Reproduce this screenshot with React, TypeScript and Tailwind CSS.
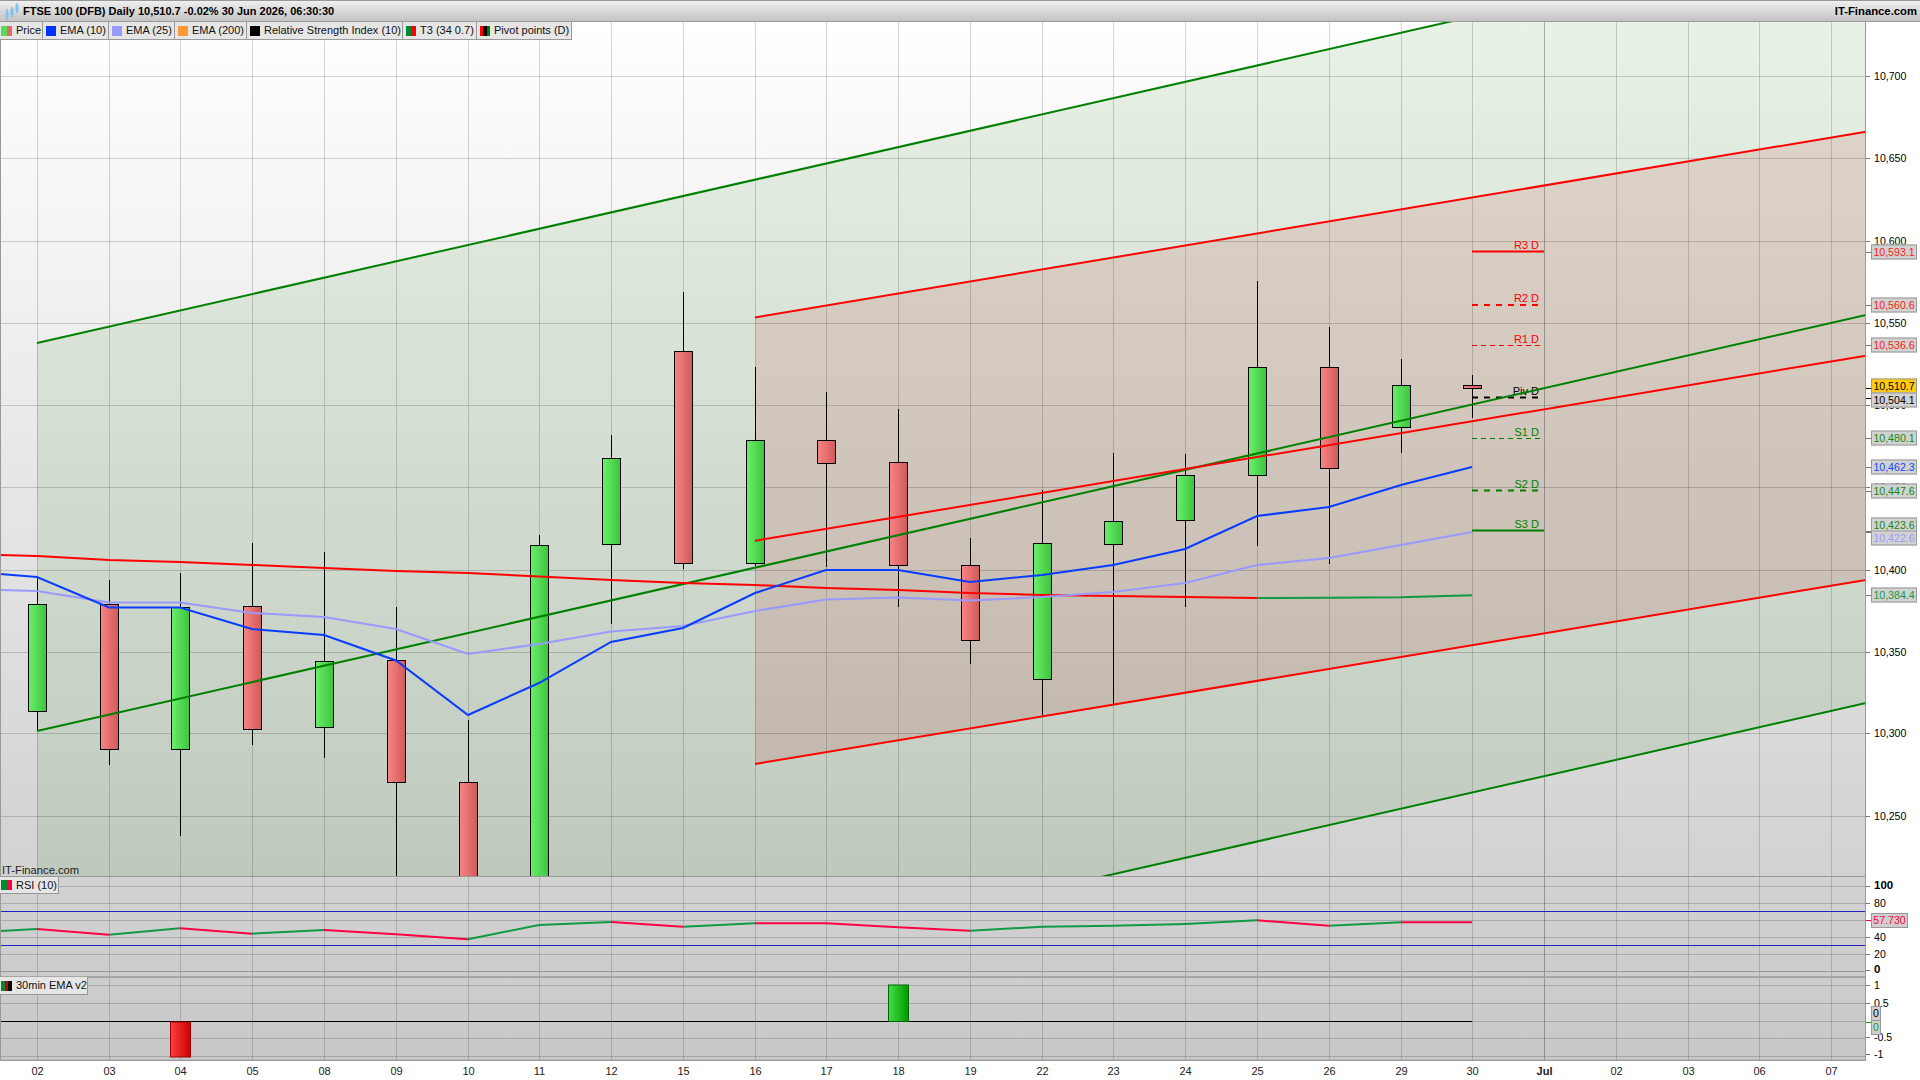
import React from "react"

const XS = [37, 109, 180, 252, 324, 396, 468, 539, 611, 683, 755, 826, 898, 970, 1042, 1113, 1185, 1257, 1329, 1401, 1472, 1544, 1616, 1688, 1759, 1831]
const DAYS = ["02", "03", "04", "05", "08", "09", "10", "11", "12", "15", "16", "17", "18", "19", "22", "23", "24", "25", "26", "29", "30", "Jul", "02", "03", "06", "07"]

// up, open edge, close edge, wick top, wick bottom
const CANDLES: [boolean, number, number, number, number][] = [
  [true, 604, 711, 577, 731],
  [false, 604, 749, 580, 765],
  [true, 607, 749, 573, 836],
  [false, 606, 729, 543, 745],
  [true, 661, 727, 552, 758],
  [false, 660, 782, 607, 876],
  [false, 782, 880, 720, 876],
  [true, 545, 880, 535, 876],
  [true, 458, 544, 435, 624],
  [false, 351, 563, 292, 569],
  [true, 440, 563, 367, 566],
  [false, 440, 463, 392, 567],
  [false, 462, 565, 409, 607],
  [false, 565, 640, 538, 664],
  [true, 543, 679, 490, 717],
  [true, 521, 544, 453, 704],
  [true, 475, 520, 454, 607],
  [true, 367, 475, 281, 546],
  [false, 367, 468, 327, 564],
  [true, 385, 427, 359, 453],
  [false, 385, 388, 375, 418],
]

const EMA10 = [574, 577, 607.5, 607.5, 629, 635, 660.5, 715, 683, 642, 628, 593, 570, 570, 582, 575, 565, 549, 516, 507, 485, 467]
const EMA25 = [590, 591, 602.5, 602.5, 613, 617, 629, 654, 644, 631.5, 626, 611, 599.5, 597.5, 600.5, 597, 592, 583, 565, 558, 545, 532]
const EMA200 = [555, 556, 560, 562, 565, 568, 571, 573, 576.5, 580, 583, 585, 588, 590, 593, 595, 596, 597, 598, 597.7, 597.3, 595.3]
const RSI = [931, 929, 934.7, 928.3, 933.7, 930, 934.3, 939.3, 925, 922, 926.7, 923.3, 923.3, 927.3, 930.7, 926.7, 925.7, 924, 920.3, 925.7, 922.3, 922.3]

const PRICE_GRID = [76.5, 158.5, 241.5, 323.5, 405.5, 487.5, 570.5, 652.5, 733.5, 816.5]
const PANEL_GRID = [886.5, 903.5, 920.5, 937.5, 954.5, 971.5, 985.5, 1003.5, 1021.5, 1038.5, 1056.5]

const PIVOTS = [
  { label: "R3 D", y: 251.5, color: "#ff0000", width: 2, dash: undefined, end: 1544 },
  { label: "R2 D", y: 305, color: "#ff0000", width: 2, dash: "6 6", end: 1544 },
  { label: "R1 D", y: 345.5, color: "#ff0000", width: 1, dash: "5 4", end: 1541 },
  { label: "Piv D", y: 397.5, color: "#000000", width: 2, dash: "6 6", end: 1544 },
  { label: "S1 D", y: 438.5, color: "#008000", width: 1, dash: "5 4", end: 1541 },
  { label: "S2 D", y: 490.5, color: "#008000", width: 2, dash: "6 6", end: 1544 },
  { label: "S3 D", y: 530.5, color: "#008000", width: 2, dash: undefined, end: 1544 },
]

const AXIS_TEXT = [
  { t: "10,700", y: 76 }, { t: "10,650", y: 158 }, { t: "10,600", y: 241 }, { t: "10,550", y: 323 },
  { t: "10,500", y: 405 }, { t: "10,450", y: 487 }, { t: "10,400", y: 570 }, { t: "10,350", y: 652 },
  { t: "10,300", y: 733 }, { t: "10,250", y: 816 },
  { t: "100", y: 886, bold: true }, { t: "80", y: 903 }, { t: "40", y: 937 }, { t: "20", y: 954 }, { t: "0", y: 970, bold: true },
  { t: "1", y: 985 }, { t: "0.5", y: 1003 }, { t: "-0.5", y: 1037 }, { t: "-1", y: 1054 },
]

const AXIS_BOXES = [
  { t: "10,593.1", y: 252, tick: 252, color: "text-[#ff2020]", bg: "bg-[#d2d2d2]" },
  { t: "10,560.6", y: 305, tick: 305, color: "text-[#ff2020]", bg: "bg-[#d2d2d2]" },
  { t: "10,536.6", y: 345, tick: 345, color: "text-[#ff2020]", bg: "bg-[#d2d2d2]" },
  { t: "10,510.7", y: 386, tick: 388, color: "text-black", bg: "bg-[#ffcc11]" },
  { t: "10,504.1", y: 400, tick: 398, color: "text-black", bg: "bg-[#d2d2d2]" },
  { t: "10,480.1", y: 438, tick: 438, color: "text-[#118811]", bg: "bg-[#d2d2d2]" },
  { t: "10,462.3", y: 467, tick: 467, color: "text-[#1144ff]", bg: "bg-[#d2d2d2]" },
  { t: "10,447.6", y: 491, tick: 491, color: "text-[#118811]", bg: "bg-[#d2d2d2]" },
  { t: "10,423.6", y: 525, tick: 531, color: "text-[#118811]", bg: "bg-[#d2d2d2]" },
  { t: "10,422.6", y: 538, tick: 532, color: "text-[#9999ff]", bg: "bg-[#d2d2d2]" },
  { t: "10,384.4", y: 595, tick: 595, color: "text-[#119944]", bg: "bg-[#d2d2d2]" },
]

const LEGEND = [
  { name: "Price", w: "w-[43px]", pad: "pl-px", icon: "w-[11px]", colors: ["bg-[#55dd55]", "bg-[#e86868]"] },
  { name: "EMA (10)", w: "w-[66px]", pad: "pl-[3px]", icon: "w-[10px]", colors: ["bg-[#0033ff]"] },
  { name: "EMA (25)", w: "w-[66px]", pad: "pl-[3px]", icon: "w-[10px]", colors: ["bg-[#9999ff]"] },
  { name: "EMA (200)", w: "w-[72px]", pad: "pl-[3px]", icon: "w-[10px]", colors: ["bg-[#ff9933]"] },
  { name: "Relative Strength Index (10)", w: "w-[156px]", pad: "pl-[3px]", icon: "w-[10px]", colors: ["bg-black"] },
  { name: "T3 (34 0.7)", w: "w-[74px]", pad: "pl-[3px]", icon: "w-[10px]", colors: ["bg-[#008833]", "bg-[#ff0000]"] },
  { name: "Pivot points (D)", w: "w-[95px]", pad: "pl-[3px]", icon: "w-[10px]", colors: ["bg-[#ff0000]", "bg-black", "bg-[#008000]"] },
]

function points(ys: number[]) {
  return ys.map((y, i) => (i === 0 ? "0" : XS[i - 1]) + "," + y).join(" ")
}

function LegendIcon({ colors, width }: { colors: string[]; width: string }) {
  return (
    <span className={`flex ${width} h-[10px] shrink-0`}>
      {colors.map((c, i) => (
        <span key={i} className={`${c} flex-1`} />
      ))}
    </span>
  )
}

function Chart() {
  return (
    <svg viewBox="0 22 1866 1039" className="block w-[1866px] h-[1039px]">
      <defs>
        <linearGradient id="bg" x1="0" y1="0" x2="0" y2="1">
          <stop offset="0" stopColor="#ffffff" />
          <stop offset="1" stopColor="#c8c8c8" />
        </linearGradient>
        <linearGradient id="up" x1="0" y1="0" x2="1" y2="0">
          <stop offset="0" stopColor="#6cee6c" />
          <stop offset="1" stopColor="#3cc43c" />
        </linearGradient>
        <linearGradient id="down" x1="0" y1="0" x2="1" y2="0">
          <stop offset="0" stopColor="#f98484" />
          <stop offset="1" stopColor="#d05a5a" />
        </linearGradient>
        <linearGradient id="barRed" x1="0" y1="0" x2="1" y2="0">
          <stop offset="0" stopColor="#ff4040" />
          <stop offset="1" stopColor="#cc0000" />
        </linearGradient>
        <linearGradient id="barGreen" x1="0" y1="0" x2="1" y2="0">
          <stop offset="0" stopColor="#44dd44" />
          <stop offset="1" stopColor="#009900" />
        </linearGradient>
        <clipPath id="main">
          <rect x="0" y="22" width="1866" height="854" />
        </clipPath>
      </defs>

      <rect x="0" y="22" width="1866" height="1039" fill="url(#bg)" />

      <g clipPath="url(#main)">
        <polygon points="37,343 1866,-73 1866,703 37,1119" fill="rgb(40,128,20)" fillOpacity="0.107" />
        <polygon points="755,317.4 1866,131.7 1866,580 755,764" fill="rgb(180,0,0)" fillOpacity="0.107" />
      </g>

      {XS.map((x, i) => (
        <line key={i} x1={x + 0.5} x2={x + 0.5} y1="22" y2="1061" stroke="#000" strokeOpacity={DAYS[i] === "Jul" ? 0.28 : 0.16} />
      ))}
      {PRICE_GRID.concat(PANEL_GRID).map((y, i) => (
        <line key={i} x1="0" x2="1866" y1={y} y2={y} stroke="#000" strokeOpacity="0.17" />
      ))}

      <g clipPath="url(#main)">
        {CANDLES.map(([up, top, bottom, wickTop, wickBottom], i) => (
          <g key={i}>
            <line x1={XS[i] + 0.5} x2={XS[i] + 0.5} y1={wickTop} y2={wickBottom} stroke="#000" strokeWidth="1" />
            <rect x={XS[i] - 8.5} y={top + 0.5} width="18" height={bottom - top} fill={up ? "url(#up)" : "url(#down)"} stroke="#000" strokeWidth="1" />
          </g>
        ))}

        {PIVOTS.map((p) => (
          <g key={p.label}>
            <line x1="1472" x2={p.end} y1={p.y} y2={p.y} stroke={p.color} strokeWidth={p.width} strokeDasharray={p.dash} />
            <text x="1539" y={p.y - 3} textAnchor="end" fontSize="11" fill={p.color}>{p.label}</text>
          </g>
        ))}

        <g fill="none" stroke="#008000" strokeWidth="2">
          <line x1="37" y1="343" x2="1866" y2="-73" />
          <line x1="37" y1="731" x2="1866" y2="315" />
          <line x1="37" y1="1119" x2="1866" y2="703" />
        </g>
        <g fill="none" stroke="#ff0000" strokeWidth="2">
          <line x1="755" y1="317.4" x2="1866" y2="131.7" />
          <line x1="755" y1="540.7" x2="1866" y2="355.7" />
          <line x1="755" y1="764" x2="1866" y2="580" />
        </g>

        <polyline points={points(EMA200.slice(0, 19))} fill="none" stroke="#ff0000" strokeWidth="2" />
        <polyline points={`1257,${EMA200[18]} 1329,${EMA200[19]} 1401,${EMA200[20]} 1472,${EMA200[21]}`} fill="none" stroke="#119944" strokeWidth="2" />
        <polyline points={points(EMA25)} fill="none" stroke="#9999ff" strokeWidth="2" />
        <polyline points={points(EMA10)} fill="none" stroke="#0a3cff" strokeWidth="2" />
      </g>

      <text x="2" y="874" fontSize="11.2" fill="#222">IT-Finance.com</text>

      <line x1="0" x2="1866" y1="876.5" y2="876.5" stroke="#999" />
      <line x1="0" x2="1866" y1="977" y2="977" stroke="#999" strokeWidth="1.5" />
      <line x1="0" x2="1866" y1="971.5" y2="971.5" stroke="#999" />

      <line x1="0" x2="1866" y1="911.5" y2="911.5" stroke="#2222bb" />
      <line x1="0" x2="1866" y1="945.5" y2="945.5" stroke="#2222bb" />
      {RSI.slice(0, -1).map((y, i) => {
        const x1 = i === 0 ? 0 : XS[i - 1]
        const next = RSI[i + 1]
        return <line key={i} x1={x1} y1={y} x2={XS[i]} y2={next} stroke={next < y ? "#119944" : "#ff0044"} strokeWidth="2" />
      })}

      <line x1="0" x2="1472" y1="1021.5" y2="1021.5" stroke="#000" />
      <rect x="170.5" y="1022" width="20" height="35" fill="url(#barRed)" stroke="#990000" />
      <rect x="888.5" y="985" width="20" height="36.5" fill="url(#barGreen)" stroke="#006600" />

      <line x1="0" x2="1866" y1="1060.5" y2="1060.5" stroke="#999" strokeWidth="1.5" />
      <line x1="0.5" x2="0.5" y1="22" y2="1061" stroke="#999" />
      <line x1="1865.5" x2="1865.5" y1="22" y2="1061" stroke="#999" />
    </svg>
  )
}

export default function App() {
  return (
    <div className="w-[1920px] h-[1080px] overflow-hidden flex flex-col bg-white text-black font-['Liberation_Sans',Arial,sans-serif]">
      <div className="h-[22px] shrink-0 flex items-center justify-between border-t border-b border-[#999] bg-linear-to-b from-[#efefef] to-[#c4c4c4] pr-[3px]">
        <div className="flex items-center">
          <svg viewBox="0 0 20 22" className="w-[20px] h-[22px] mr-[3px]">
            <g stroke="#5aa8e0" strokeWidth="1">
              <line x1="7" y1="9" x2="7" y2="20" />
              <line x1="12" y1="7" x2="12" y2="17" />
              <line x1="17" y1="3" x2="17" y2="13" />
            </g>
            <rect x="5.5" y="12" width="3" height="6" fill="#7cc4f4" />
            <rect x="10.5" y="9" width="3" height="6" fill="#7cc4f4" />
            <rect x="15.5" y="5" width="3" height="6" fill="#7cc4f4" />
          </svg>
          <span className="text-[11px] font-bold">FTSE 100 (DFB) Daily 10,510.7 -0.02% 30 Jun 2026, 06:30:30</span>
        </div>
        <span className="text-[11.3px] font-bold">IT-Finance.com</span>
      </div>

      <div className="flex flex-1 min-h-0">
        <div className="relative w-[1866px] shrink-0">
          <Chart />
          <div className="absolute left-0 top-0 flex h-[18px]">
            {LEGEND.map((item) => (
              <div key={item.name} className={`${item.w} ${item.pad} flex items-center gap-[4px] shrink-0 bg-[#e6e6e6] border-r border-b border-[#999] text-[11px] text-[#111] whitespace-nowrap`}>
                <LegendIcon colors={item.colors} width={item.icon} />
                <span>{item.name}</span>
              </div>
            ))}
          </div>
          <div className="absolute left-0 top-[855px] w-[59px] h-[17px] flex items-center gap-[4px] pl-px bg-[#e6e6e6] border-r border-b border-[#999] text-[11px] text-[#111]">
            <LegendIcon colors={["bg-[#008833]", "bg-[#ff0044]"]} width="w-[11px]" />
            <span>RSI (10)</span>
          </div>
          <div className="absolute left-0 top-[955px] w-[88px] h-[18px] flex items-center gap-[4px] pl-px bg-[#e6e6e6] border-r border-b border-[#999] text-[11px] text-[#111]">
            <LegendIcon colors={["bg-[#008833]", "bg-[#cc0000]", "bg-black"]} width="w-[11px]" />
            <span>30min EMA v2</span>
          </div>
        </div>

        <div className="relative flex-1 text-[10.6px] leading-none">
          {AXIS_TEXT.map((a) => (
            <React.Fragment key={a.t + a.y}>
              <span className="absolute left-0 w-[4px] h-px bg-[#777]" style={{ top: a.y - 22 }} />
              <span className={`absolute left-[8px] -translate-y-1/2 ${a.bold ? "font-bold text-[11.5px]" : ""}`} style={{ top: a.y - 22.5 }}>{a.t}</span>
            </React.Fragment>
          ))}
          {AXIS_BOXES.map((b) => (
            <React.Fragment key={b.t}>
              <span className={`absolute left-0 w-[5px] h-px ${b.color === "text-black" ? "bg-black" : "bg-[#777]"}`} style={{ top: b.tick - 22 }} />
              <span className={`absolute left-[5px] w-[46px] h-[15px] flex items-center justify-center border border-[#999] -translate-y-1/2 ${b.color} ${b.bg}`} style={{ top: b.y - 22 }}>{b.t}</span>
            </React.Fragment>
          ))}
          <span className="absolute left-0 top-[898px] w-[5px] h-px bg-[#ff0044]" />
          <span className="absolute left-[5px] top-[891px] w-[37px] h-[15px] flex items-center justify-center border border-[#999] bg-[#cfcfcf] text-[#ff0044]">57.730</span>
          <span className="absolute left-[5px] top-[984px] w-[10px] h-[15px] flex items-center justify-center border border-[#999] bg-[#cfcfcf]">0</span>
          <span className="absolute left-0 top-[1000px] w-[5px] h-px bg-[#119911]" />
          <span className="absolute left-[5px] top-[998px] w-[10px] h-[15px] flex items-center justify-center border border-[#999] bg-[#cfcfcf] text-[#119911]">0</span>
        </div>
      </div>

      <div className="relative h-[19px] shrink-0 text-[11px] text-[#222]">
        {DAYS.map((d, i) => (
          <span key={i} className={`absolute top-[2px] -translate-x-1/2 ${d === "Jul" ? "font-bold" : ""}`} style={{ left: XS[i] + 0.5 }}>{d}</span>
        ))}
      </div>
    </div>
  )
}
